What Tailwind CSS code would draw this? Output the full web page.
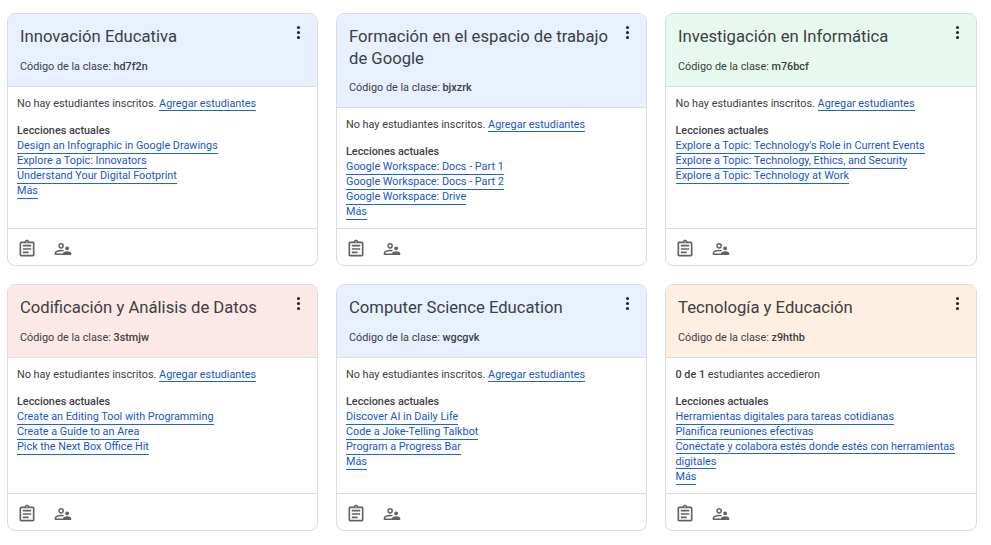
<!DOCTYPE html>
<html lang="es">
<head>
<meta charset="UTF-8">
<title>Clases</title>
<script src="https://cdn.jsdelivr.net/npm/@tailwindcss/browser@4"></script>
</head>
<body class="bg-white font-['Roboto',sans-serif] text-[10.83px] leading-[15px] text-[#3c4043]">
<svg class="hidden">
  <symbol id="i-assign" viewBox="0 0 24 24"><path d="M7 15h7v2H7zm0-4h10v2H7zm0-4h10v2H7zm12-4h-4.18C14.4 1.84 13.3 1 12 1c-1.3 0-2.4.84-2.82 2H5c-1.1 0-2 .9-2 2v14c0 1.1.9 2 2 2h14c1.1 0 2-.9 2-2V5c0-1.1-.9-2-2-2zm-7-.25c.41 0 .75.34.75.75s-.34.75-.75.75-.75-.34-.75-.75.34-.75.75-.75zM19 19H5V5h14v14z"/></symbol>
  <symbol id="i-people" viewBox="0 0 24 24"><path d="M9.5 4a3.75 3.75 0 1 0 0 7.5 3.75 3.75 0 0 0 0-7.5zm0 2a1.75 1.75 0 1 1 0 3.5 1.75 1.75 0 0 1 0-3.5zM9.5 13C6.3 13 1 14.5 1 17.2V20h11v-2H3v-.8c.3-.9 3.7-2.2 6.5-2.2.8 0 1.6.1 2.4.3.5-.6 1.1-1 1.7-1.4-1.5-.6-3.1-.9-4.100-.9zM17.500 8.500a2.600 2.600 0 1 0 0 5.200 2.600 2.600 0 0 0 0-5.200zM17.500 15c-2.300 0-5.500 1.100-5.500 2.800V20h11v-2.200c0-1.700-3.200-2.800-5.500-2.800z"/></symbol>
</svg>
<main class="grid grid-cols-[311px_311px_312px] gap-[18px] px-[7px] pt-[13px]">

  <article class="flex flex-col h-[253px] border border-[#dadce0] rounded-lg overflow-hidden">
    <header class="relative bg-[#e8f0fe] border-b border-[#dadce0] pl-3 pr-[28px] pt-[12px] h-[73px]">
      <h2 class="text-[16.67px] leading-[22px]">Innovación Educativa</h2>
      <p class="mt-[11px]">Código de la clase: <b class="font-medium">hd7f2n</b></p>
      <span class="absolute right-[17px] top-[12px] flex flex-col gap-[2px]"><i class="size-[3px] rounded-full bg-[#202124]"></i><i class="size-[3px] rounded-full bg-[#202124]"></i><i class="size-[3px] rounded-full bg-[#202124]"></i></span>
    </header>
    <div class="flex-1 px-[9px] pt-[9px]">
      <p>No hay estudiantes inscritos. <a class="text-[#1a56c4] border-b border-[#1967d2]">Agregar estudiantes</a></p>
      <h3 class="mt-[12px] font-medium">Lecciones actuales</h3>
      <a class="table text-[#1a56c4] border-b border-[#1967d2] -mb-px">Design an Infographic in Google Drawings</a>
      <a class="table text-[#1a56c4] border-b border-[#1967d2] -mb-px">Explore a Topic: Innovators</a>
      <a class="table text-[#1a56c4] border-b border-[#1967d2] -mb-px">Understand Your Digital Footprint</a>
      <a class="table text-[#1a56c4] border-b border-[#1967d2] -mb-px">Más</a>
    </div>
    <footer class="flex items-center gap-[17px] border-t border-[#dadce0] h-[37px] pl-[9px] pt-[3px]">
      <svg class="size-[20px] fill-[#5f6368]"><use href="#i-assign"/></svg>
      <svg class="size-[18px] fill-[#5f6368]"><use href="#i-people"/></svg>
    </footer>
  </article>

  <article class="flex flex-col h-[253px] border border-[#dadce0] rounded-lg overflow-hidden">
    <header class="relative bg-[#e8f0fe] border-b border-[#dadce0] pl-3 pr-[28px] pt-[12px] h-[94px]">
      <h2 class="text-[16.67px] leading-[22px]">Formación en el espacio de trabajo de Google</h2>
      <p class="mt-[10px]">Código de la clase: <b class="font-medium">bjxzrk</b></p>
      <span class="absolute right-[17px] top-[12px] flex flex-col gap-[2px]"><i class="size-[3px] rounded-full bg-[#202124]"></i><i class="size-[3px] rounded-full bg-[#202124]"></i><i class="size-[3px] rounded-full bg-[#202124]"></i></span>
    </header>
    <div class="flex-1 px-[9px] pt-[9px]">
      <p>No hay estudiantes inscritos. <a class="text-[#1a56c4] border-b border-[#1967d2]">Agregar estudiantes</a></p>
      <h3 class="mt-[12px] font-medium">Lecciones actuales</h3>
      <a class="table text-[#1a56c4] border-b border-[#1967d2] -mb-px">Google Workspace: Docs - Part 1</a>
      <a class="table text-[#1a56c4] border-b border-[#1967d2] -mb-px">Google Workspace: Docs - Part 2</a>
      <a class="table text-[#1a56c4] border-b border-[#1967d2] -mb-px">Google Workspace: Drive</a>
      <a class="table text-[#1a56c4] border-b border-[#1967d2] -mb-px">Más</a>
    </div>
    <footer class="flex items-center gap-[17px] border-t border-[#dadce0] h-[37px] pl-[9px] pt-[3px]">
      <svg class="size-[20px] fill-[#5f6368]"><use href="#i-assign"/></svg>
      <svg class="size-[18px] fill-[#5f6368]"><use href="#i-people"/></svg>
    </footer>
  </article>

  <article class="flex flex-col h-[253px] border border-[#dadce0] rounded-lg overflow-hidden">
    <header class="relative bg-[#e7f9ee] border-b border-[#dadce0] pl-3 pr-[28px] pt-[12px] h-[73px]">
      <h2 class="text-[16.67px] leading-[22px]">Investigación en Informática</h2>
      <p class="mt-[11px]">Código de la clase: <b class="font-medium">m76bcf</b></p>
      <span class="absolute right-[17px] top-[12px] flex flex-col gap-[2px]"><i class="size-[3px] rounded-full bg-[#202124]"></i><i class="size-[3px] rounded-full bg-[#202124]"></i><i class="size-[3px] rounded-full bg-[#202124]"></i></span>
    </header>
    <div class="flex-1 pl-[9.5px] pr-[9px] pt-[9px]">
      <p>No hay estudiantes inscritos. <a class="text-[#1a56c4] border-b border-[#1967d2]">Agregar estudiantes</a></p>
      <h3 class="mt-[12px] font-medium">Lecciones actuales</h3>
      <a class="table text-[#1a56c4] border-b border-[#1967d2] -mb-px">Explore a Topic: Technology's Role in Current Events</a>
      <a class="table text-[#1a56c4] border-b border-[#1967d2] -mb-px">Explore a Topic: Technology, Ethics, and Security</a>
      <a class="table text-[#1a56c4] border-b border-[#1967d2] -mb-px">Explore a Topic: Technology at Work</a>
    </div>
    <footer class="flex items-center gap-[17px] border-t border-[#dadce0] h-[37px] pl-[9px] pt-[3px]">
      <svg class="size-[20px] fill-[#5f6368]"><use href="#i-assign"/></svg>
      <svg class="size-[18px] fill-[#5f6368]"><use href="#i-people"/></svg>
    </footer>
  </article>

  <article class="flex flex-col h-[247px] border border-[#dadce0] rounded-lg overflow-hidden">
    <header class="relative bg-[#fce8e6] border-b border-[#dadce0] pl-3 pr-[28px] pt-[12px] h-[73px]">
      <h2 class="text-[16.67px] leading-[22px]">Codificación y Análisis de Datos</h2>
      <p class="mt-[11px]">Código de la clase: <b class="font-medium">3stmjw</b></p>
      <span class="absolute right-[17px] top-[12px] flex flex-col gap-[2px]"><i class="size-[3px] rounded-full bg-[#202124]"></i><i class="size-[3px] rounded-full bg-[#202124]"></i><i class="size-[3px] rounded-full bg-[#202124]"></i></span>
    </header>
    <div class="flex-1 px-[9px] pt-[9px]">
      <p>No hay estudiantes inscritos. <a class="text-[#1a56c4] border-b border-[#1967d2]">Agregar estudiantes</a></p>
      <h3 class="mt-[12px] font-medium">Lecciones actuales</h3>
      <a class="table text-[#1a56c4] border-b border-[#1967d2] -mb-px">Create an Editing Tool with Programming</a>
      <a class="table text-[#1a56c4] border-b border-[#1967d2] -mb-px">Create a Guide to an Area</a>
      <a class="table text-[#1a56c4] border-b border-[#1967d2] -mb-px">Pick the Next Box Office Hit</a>
    </div>
    <footer class="flex items-center gap-[17px] border-t border-[#dadce0] h-[37px] pl-[9px] pt-[3px]">
      <svg class="size-[20px] fill-[#5f6368]"><use href="#i-assign"/></svg>
      <svg class="size-[18px] fill-[#5f6368]"><use href="#i-people"/></svg>
    </footer>
  </article>

  <article class="flex flex-col h-[247px] border border-[#dadce0] rounded-lg overflow-hidden">
    <header class="relative bg-[#e8f0fe] border-b border-[#dadce0] pl-3 pr-[28px] pt-[12px] h-[73px]">
      <h2 class="text-[16.67px] leading-[22px]">Computer Science Education</h2>
      <p class="mt-[11px]">Código de la clase: <b class="font-medium">wgcgvk</b></p>
      <span class="absolute right-[17px] top-[12px] flex flex-col gap-[2px]"><i class="size-[3px] rounded-full bg-[#202124]"></i><i class="size-[3px] rounded-full bg-[#202124]"></i><i class="size-[3px] rounded-full bg-[#202124]"></i></span>
    </header>
    <div class="flex-1 px-[9px] pt-[9px]">
      <p>No hay estudiantes inscritos. <a class="text-[#1a56c4] border-b border-[#1967d2]">Agregar estudiantes</a></p>
      <h3 class="mt-[12px] font-medium">Lecciones actuales</h3>
      <a class="table text-[#1a56c4] border-b border-[#1967d2] -mb-px">Discover AI in Daily Life</a>
      <a class="table text-[#1a56c4] border-b border-[#1967d2] -mb-px">Code a Joke-Telling Talkbot</a>
      <a class="table text-[#1a56c4] border-b border-[#1967d2] -mb-px">Program a Progress Bar</a>
      <a class="table text-[#1a56c4] border-b border-[#1967d2] -mb-px">Más</a>
    </div>
    <footer class="flex items-center gap-[17px] border-t border-[#dadce0] h-[37px] pl-[9px] pt-[3px]">
      <svg class="size-[20px] fill-[#5f6368]"><use href="#i-assign"/></svg>
      <svg class="size-[18px] fill-[#5f6368]"><use href="#i-people"/></svg>
    </footer>
  </article>

  <article class="flex flex-col h-[247px] border border-[#dadce0] rounded-lg overflow-hidden">
    <header class="relative bg-[#feefe3] border-b border-[#dadce0] pl-3 pr-[28px] pt-[12px] h-[73px]">
      <h2 class="text-[16.67px] leading-[22px]">Tecnología y Educación</h2>
      <p class="mt-[11px]">Código de la clase: <b class="font-medium">z9hthb</b></p>
      <span class="absolute right-[17px] top-[12px] flex flex-col gap-[2px]"><i class="size-[3px] rounded-full bg-[#202124]"></i><i class="size-[3px] rounded-full bg-[#202124]"></i><i class="size-[3px] rounded-full bg-[#202124]"></i></span>
    </header>
    <div class="flex-1 pl-[9.5px] pr-[9px] pt-[9px]">
      <p><b class="font-medium">0 de 1</b> estudiantes accedieron</p>
      <h3 class="mt-[12px] font-medium">Lecciones actuales</h3>
      <a class="table text-[#1a56c4] border-b border-[#1967d2] -mb-px">Herramientas digitales para tareas cotidianas</a>
      <a class="table text-[#1a56c4] border-b border-[#1967d2] -mb-px">Planifica reuniones efectivas</a>
      <a class="inline text-[#1a56c4] border-b border-[#1967d2]">Conéctate y colabora estés donde estés con herramientas digitales</a>
      <a class="table text-[#1a56c4] border-b border-[#1967d2] -mb-px">Más</a>
    </div>
    <footer class="flex items-center gap-[17px] border-t border-[#dadce0] h-[37px] pl-[9px] pt-[3px]">
      <svg class="size-[20px] fill-[#5f6368]"><use href="#i-assign"/></svg>
      <svg class="size-[18px] fill-[#5f6368]"><use href="#i-people"/></svg>
    </footer>
  </article>

</main>
</body>
</html>
